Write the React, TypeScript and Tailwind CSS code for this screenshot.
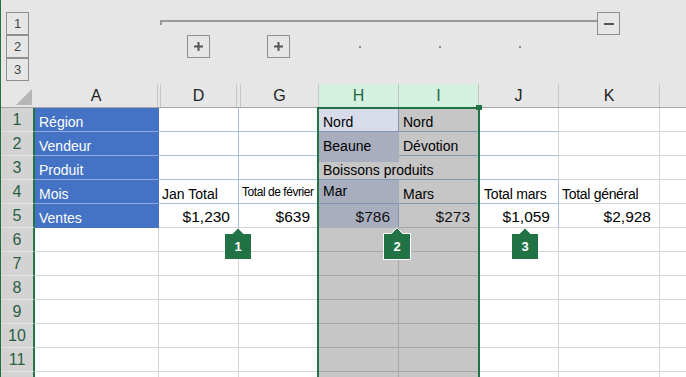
import React from "react";

type Cell = {
  w: string;
  cls: string;
  text?: string;
  tcls?: string;
};

const GREEN = "#217346";

function Callout({ n, pos, bordered }: { n: string; pos: string; bordered?: boolean }) {
  if (bordered) {
    return (
      <div className={`absolute ${pos} w-[28px] h-[33px]`}>
        <svg width="28" height="33" viewBox="0 0 28 33" className="absolute inset-0">
          <path d="M0.5 6.5 H8.5 L14 0.8 L19.5 6.5 H27.5 V32.5 H0.5 Z" fill={GREEN} stroke="#ffffff" strokeWidth="1" />
        </svg>
        <span className="absolute left-0 right-0 top-[7px] h-[25px] flex items-center justify-center text-white text-[13px] font-semibold">
          {n}
        </span>
      </div>
    );
  }
  return (
    <div className={`absolute ${pos} w-[26px] h-[31px]`}>
      <svg width="26" height="31" viewBox="0 0 26 31" className="absolute inset-0">
        <path d="M0 6 H7.5 L13 0.5 L18.5 6 H26 V31 H0 Z" fill={GREEN} />
      </svg>
      <span className="absolute left-0 right-0 top-[6px] h-[25px] flex items-center justify-center text-white text-[13px] font-semibold">
        {n}
      </span>
    </div>
  );
}

const base = "shrink-0 h-[24px] border-r border-b flex items-end whitespace-nowrap overflow-visible";
const normal = "bg-white border-[#d4d4d4]";
const selG = "bg-[#c6c6c6] border-[#a6a6a6]";

function blueA(text: string, last?: boolean): Cell {
  return {
    w: "w-[124px]",
    cls: `bg-[#4472c4] border-r-[#4472c4] ${last ? "border-b-[#4472c4]" : "border-b-[#8faadc]"}`,
    text,
    tcls: "pl-[4px] pb-[1px] leading-[16px] text-[14px] text-white",
  };
}

const lbl = "pl-[4px] pb-[1px] leading-[16px] text-[14px] text-black";
const val = "w-full text-right pr-[8px] pb-[1px] leading-[18px] text-[15.5px] text-black";
const valSel = "w-full text-right pr-[8px] pb-[1px] leading-[18px] text-[15.5px] text-[#111]";

const rows: Cell[][] = [
  [
    blueA("Région"),
    { w: "w-[80px]", cls: "bg-white border-[#a9bfe6]" },
    { w: "w-[80px]", cls: "bg-white border-[#a9bfe6]" },
    { w: "w-[80px]", cls: "bg-[#d8dcea] border-[#8396b5]", text: "Nord", tcls: lbl },
    { w: "w-[80px]", cls: "bg-[#c6c6c6] border-[#8396b5]", text: "Nord", tcls: lbl },
    { w: "w-[80px]", cls: "bg-white border-r-[#d4d4d4] border-b-[#a9bfe6]" },
    { w: "w-[101px]", cls: normal },
  ],
  [
    blueA("Vendeur"),
    { w: "w-[80px]", cls: "bg-white border-[#a9bfe6]" },
    { w: "w-[80px]", cls: "bg-white border-[#a9bfe6]" },
    { w: "w-[80px]", cls: "bg-[#a9aebf] border-[#a9aebf]", text: "Beaune", tcls: lbl },
    { w: "w-[80px]", cls: "bg-[#c6c6c6] border-[#8396b5]", text: "Dévotion", tcls: lbl },
    { w: "w-[80px]", cls: "bg-white border-r-[#d4d4d4] border-b-[#a9bfe6]" },
    { w: "w-[101px]", cls: normal },
  ],
  [
    blueA("Produit"),
    { w: "w-[80px]", cls: "bg-white border-[#a9bfe6]" },
    { w: "w-[80px]", cls: "bg-white border-[#a9bfe6]" },
    {
      w: "w-[80px]",
      cls: "border-r-0 bg-[linear-gradient(to_bottom,#a9aebf_6px,#c6c6c6_6px)] border-b-[#8396b5]",
      text: "Boissons produits",
      tcls: `${lbl} relative`,
    },
    { w: "w-[80px]", cls: "bg-[#c6c6c6] border-[#8396b5]" },
    { w: "w-[80px]", cls: "bg-white border-r-[#d4d4d4] border-b-[#a9bfe6]" },
    { w: "w-[101px]", cls: normal },
  ],
  [
    blueA("Mois"),
    { w: "w-[80px]", cls: "bg-white border-[#a9bfe6]", text: "Jan Total", tcls: "pl-[3px] pb-[1px] leading-[16px] text-[14px] text-black" },
    {
      w: "w-[80px]",
      cls: "bg-white border-[#a9bfe6]",
      text: "Total de février",
      tcls: "pl-[3px] pb-[4px] leading-[14px] text-[12px] tracking-[-0.45px] text-black",
    },
    { w: "w-[80px]", cls: "bg-[#a9aebf] border-r-[#a9aebf] border-b-[#8396b5]", text: "Mar", tcls: "pl-[4px] pb-[4px] leading-[16px] text-[14px] text-black" },
    { w: "w-[80px]", cls: "bg-[#c6c6c6] border-[#8396b5]", text: "Mars", tcls: lbl },
    { w: "w-[80px]", cls: "bg-white border-[#a9bfe6]", text: "Total mars", tcls: "pl-[5px] pb-[1px] leading-[16px] text-[14px] tracking-[-0.2px] text-black" },
    { w: "w-[101px]", cls: normal, text: "Total général", tcls: "pl-[3px] pb-[1px] leading-[16px] text-[14px] tracking-[-0.3px] text-black" },
  ],
  [
    blueA("Ventes", true),
    { w: "w-[80px]", cls: "bg-white border-r-[#a9bfe6] border-b-[#d4d4d4]", text: "$1,230", tcls: val },
    { w: "w-[80px]", cls: "bg-white border-r-[#a9bfe6] border-b-[#d4d4d4]", text: "$639", tcls: val },
    { w: "w-[80px]", cls: "bg-[#a9aebf] border-r-[#8396b5] border-b-[#a9aebf]", text: "$786", tcls: valSel },
    { w: "w-[80px]", cls: "bg-[#c6c6c6] border-[#a6a6a6]", text: "$273", tcls: valSel },
    { w: "w-[80px]", cls: "bg-white border-r-[#a9bfe6] border-b-[#d4d4d4]", text: "$1,059", tcls: val },
    { w: "w-[101px]", cls: normal, text: "$2,928", tcls: val },
  ],
];

const emptyRow: Cell[] = [
  { w: "w-[124px]", cls: normal },
  { w: "w-[80px]", cls: normal },
  { w: "w-[80px]", cls: normal },
  { w: "w-[80px]", cls: selG },
  { w: "w-[80px]", cls: selG },
  { w: "w-[80px]", cls: normal },
  { w: "w-[101px]", cls: normal },
];

const allRows: Cell[][] = [...rows, ...Array.from({ length: 7 }, () => emptyRow)];

export default function App() {
  return (
    <div className="relative flex w-[686px] h-[377px] overflow-hidden bg-[#e6e6e6] font-['Liberation_Sans',Arial,sans-serif]">
      <div className="w-px shrink-0 bg-[#217346]" />
      <div className="flex-1 flex flex-col">
        {/* outline area */}
        <div className="h-[84px] shrink-0 flex">
          <div className="ml-[5px] pt-[12px] flex flex-col">
            {["1", "2", "3"].map((n) => (
              <div
                key={n}
                className="w-[23px] h-[23px] border border-[#8f8f8f] flex items-center justify-center text-[13px] text-[#444]"
              >
                {n}
              </div>
            ))}
          </div>
          <div className="ml-[131px] pt-[12px] flex flex-col">
            <div className="h-[23px] flex items-start">
              <div className="mt-[8px] w-[437px] h-[5px] border-t-2 border-l-2 border-[#9a9a9a]" />
              <div className="w-[23px] h-[23px] border border-[#8f8f8f] flex items-center justify-center">
                <div className="w-[10px] h-[2px] bg-[#555]" />
              </div>
            </div>
            <div className="h-[23px] flex items-center">
              <div className="ml-[27px] w-[23px] h-[23px] border border-[#8f8f8f] flex items-center justify-center">
                <svg width="9" height="9" viewBox="0 0 9 9">
                  <path d="M0 3.5 H9 V5.5 H0 Z M3.5 0 H5.5 V9 H3.5 Z" fill="#555" />
                </svg>
              </div>
              <div className="ml-[57px] w-[23px] h-[23px] border border-[#8f8f8f] flex items-center justify-center">
                <svg width="9" height="9" viewBox="0 0 9 9">
                  <path d="M0 3.5 H9 V5.5 H0 Z M3.5 0 H5.5 V9 H3.5 Z" fill="#555" />
                </svg>
              </div>
              <div className="ml-[69px] w-[2px] h-[2px] bg-[#8a8a8a]" />
              <div className="ml-[78px] w-[2px] h-[2px] bg-[#8a8a8a]" />
              <div className="ml-[78px] w-[2px] h-[2px] bg-[#8a8a8a]" />
            </div>
          </div>
        </div>

        {/* column headers */}
        <div className="h-[24px] shrink-0 flex border-b border-[#a6a6a6] text-[16px] text-[#222]">
          <div className="w-[34px] shrink-0 flex items-end justify-end pr-[3px] pb-[2px]">
            <svg width="16" height="16" viewBox="0 0 16 16">
              <path d="M16 0 V16 H0 Z" fill="#b5b5b5" />
            </svg>
          </div>
          <div className="w-[123px] shrink-0 border-r border-[#c6c6c6] flex items-center justify-center">A</div>
          <div className="w-[2px] shrink-0" />
          <div className="w-[77px] shrink-0 border-l border-r border-[#c6c6c6] flex items-center justify-center">D</div>
          <div className="w-[3px] shrink-0" />
          <div className="w-[79px] shrink-0 border-l border-r border-[#c6c6c6] flex items-center justify-center">G</div>
          <div className="w-[80px] shrink-0 border-r border-[#c0c0c0] bg-[#d3f0e0] text-[#1d6a40] flex items-center justify-center">H</div>
          <div className="w-[80px] shrink-0 border-r border-[#c0c0c0] bg-[#d3f0e0] text-[#1d6a40] flex items-center justify-center">I</div>
          <div className="w-[80px] shrink-0 border-r border-[#c6c6c6] flex items-center justify-center">J</div>
          <div className="w-[101px] shrink-0 border-r border-[#c6c6c6] flex items-center justify-center">K</div>
          <div className="flex-1" />
        </div>

        {/* rows */}
        {allRows.map((cells, i) => (
          <div key={i} className="flex h-[24px] shrink-0">
            <div className="w-[34px] shrink-0 h-[24px] bg-[#d3d3d3] border-r-2 border-r-[#217346] border-b border-b-[#e2e2e2] flex items-center justify-center pt-[1px] text-[16px] text-[#2a5f43]">
              {i < 11 ? i + 1 : null}
            </div>
            {cells.map((c, j) => (
              <div key={j} className={`${base} ${c.w} ${c.cls}`}>
                {c.text ? <span className={c.tcls}>{c.text}</span> : null}
              </div>
            ))}
            <div className="flex-1 h-[24px] bg-white border-b border-[#d4d4d4]" />
          </div>
        ))}
      </div>

      {/* selection border */}
      <div className="absolute left-[317px] top-[107px] w-[163px] h-[280px] border-2 border-[#217346] pointer-events-none" />
      <div className="absolute left-[476px] top-[105px] w-[6px] h-[5px] bg-[#217346]" />

      <Callout n="1" pos="left-[225px] top-[228px]" />
      <Callout n="2" pos="left-[383px] top-[227px]" bordered />
      <Callout n="3" pos="left-[512px] top-[228px]" />
    </div>
  );
}
